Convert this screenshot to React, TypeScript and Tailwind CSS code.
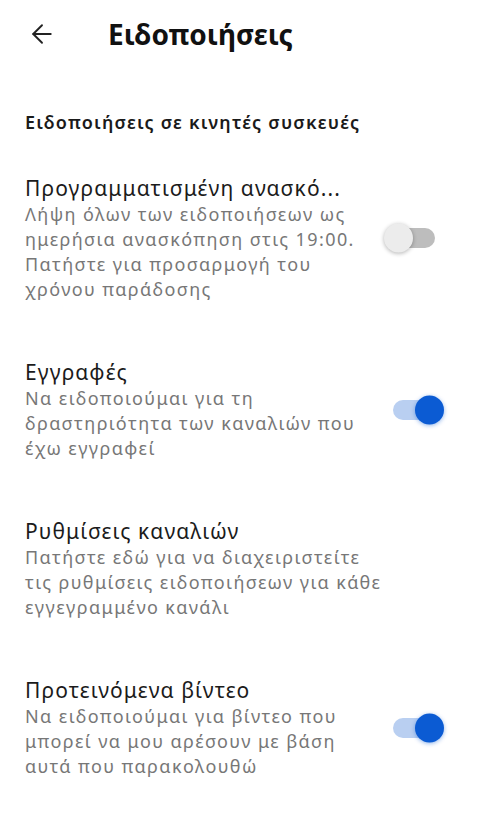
import { ArrowLeft } from "lucide-react";

type Setting = {
	title: string;
	lines: string[];
	toggle?: "on" | "off";
};

const settings: Setting[] = [
	{
		title: "Προγραμματισμένη ανασκό...",
		lines: [
			"Λήψη όλων των ειδοποιήσεων ως",
			"ημερήσια ανασκόπηση στις 19:00.",
			"Πατήστε για προσαρμογή του",
			"χρόνου παράδοσης",
		],
		toggle: "off",
	},
	{
		title: "Εγγραφές",
		lines: [
			"Να ειδοποιούμαι για τη",
			"δραστηριότητα των καναλιών που",
			"έχω εγγραφεί",
		],
		toggle: "on",
	},
	{
		title: "Ρυθμίσεις καναλιών",
		lines: [
			"Πατήστε εδώ για να διαχειριστείτε",
			"τις ρυθμίσεις ειδοποιήσεων για κάθε",
			"εγγεγραμμένο κανάλι",
		],
	},
	{
		title: "Προτεινόμενα βίντεο",
		lines: [
			"Να ειδοποιούμαι για βίντεο που",
			"μπορεί να μου αρέσουν με βάση",
			"αυτά που παρακολουθώ",
		],
		toggle: "on",
	},
];

function Toggle({ on }: { on: boolean }) {
	return (
		<div
			className={`relative h-[20px] w-[42px] rounded-full ${
				on ? "bg-[#b9cff1]" : "bg-[#bdbdbd]"
			}`}
		>
			{on ? (
				<span className="absolute right-[-9px] top-1/2 h-[29px] w-[29px] -translate-y-1/2 rounded-full bg-[#0b5bd3] shadow-[0_1px_4px_rgba(11,91,211,0.45)]" />
			) : (
				<span className="absolute left-[-9px] top-1/2 h-[29px] w-[29px] -translate-y-1/2 rounded-full bg-[#ececec] shadow-[0_1px_4px_rgba(0,0,0,0.3)]" />
			)}
		</div>
	);
}

export default function App() {
	return (
		<div className="min-h-[826px] w-[480px] bg-white font-['Noto_Sans',sans-serif]">
			<header className="flex items-center pt-[16px]">
				<div className="flex w-[108px] shrink-0 items-center pl-[27px]">
					<ArrowLeft size={30} strokeWidth={1.5} className="text-[#222]" />
				</div>
				<h1 className="text-[28px] font-bold leading-[36px] text-[#111]">
					Ειδοποιήσεις
				</h1>
			</header>

			<h2 className="mt-[58px] px-[25px] text-[18px] font-semibold leading-[24px] tracking-[1.2px] text-[#1a1a1a]">
				Ειδοποιήσεις σε κινητές συσκευές
			</h2>

			<div className="mt-[12px] flex flex-col">
				{settings.map((s) => (
					<div
						key={s.title}
						className="flex items-center justify-between py-[28px] pl-[25px] pr-[36px]"
					>
						<div className="flex flex-col">
							<span className="whitespace-nowrap text-[21px] leading-[28px] tracking-[1.1px] text-[#1b1b1b]">
								{s.title}
							</span>
							<p className="whitespace-nowrap text-[18px] leading-[25px] tracking-[1.4px] text-[#777]">
								{s.lines.map((l) => (
									<span key={l} className="block">
										{l}
									</span>
								))}
							</p>
						</div>
						{s.toggle && (
							<div className="pr-[9px]">
								<Toggle on={s.toggle === "on"} />
							</div>
						)}
					</div>
				))}
			</div>
		</div>
	);
}
